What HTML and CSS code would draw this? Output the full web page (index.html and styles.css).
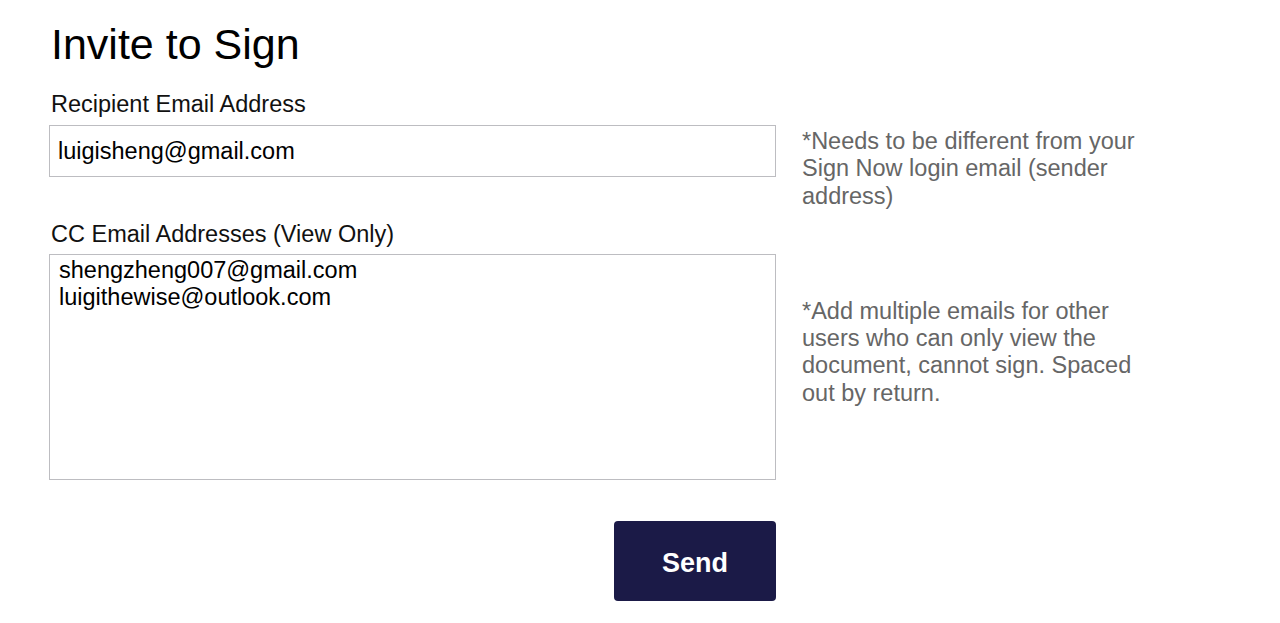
FILE: index.html
```html
<!DOCTYPE html>
<html lang="en">

<head>
	<meta charset="UTF-8">
	<meta name="viewport" content="width=device-width, initial-scale=1.0">
	<title>Invite to Sign</title>
	<link rel="stylesheet" href="styles.css">
</head>

<body>
	<div class="container">
		<h1>Invite to Sign</h1>

		<form id="inviteForm" class="invite-form">
			<label for="recipient" class="label-recipient">Recipient Email Address</label>
			<input type="email" id="recipient" name="recipient" class="field-recipient" value="luigisheng@gmail.com">
			<p class="hint hint-recipient">*Needs to be different from your Sign Now login email (sender address)</p>

			<label for="cc" class="label-cc">CC Email Addresses (View Only)</label>
			<textarea id="cc" name="cc" class="field-cc">shengzheng007@gmail.com
luigithewise@outlook.com</textarea>
			<p class="hint hint-cc">*Add multiple emails for other users who can only view the document, cannot sign. Spaced out by return.</p>

			<button type="button" class="send-btn">Send</button>
		</form>
	</div>
</body>

</html>
```

FILE: styles.css
```css
body {
	font-family: "Liberation Sans", Arial, Helvetica, sans-serif;
	margin: 0;
	padding: 0;
	background-color: #ffffff;
	color: #111;
}

.container {
	padding: 20px 49px;
}

h1 {
	font-size: 43px;
	font-weight: normal;
	color: #000;
	margin: 0 0 21.6px;
	padding-left: 2px;
}

.invite-form {
	display: grid;
	grid-template-columns: 727px 345px;
	column-gap: 26px;
	grid-template-areas:
		"l1 ."
		"f1 h1"
		"l2 h1"
		"f2 h2"
		"btn .";
	font-size: 23.5px;
}

.invite-form label {
	display: block;
	line-height: 27px;
	padding-left: 2px;
}

.label-recipient {
	grid-area: l1;
	margin-bottom: 7px;
}

.label-cc {
	grid-area: l2;
	margin-top: 44px;
	margin-bottom: 6.3px;
}

.field-recipient,
.field-cc {
	box-sizing: border-box;
	width: 100%;
	border: 1px solid #bdbdc1;
	border-radius: 0;
	font-family: inherit;
	font-size: 23.5px;
	color: #000;
	line-height: 27px;
	margin: 0;
	outline: none;
	background: #fff;
}

.field-recipient {
	grid-area: f1;
	height: 52px;
	padding: 2px 8px 0;
}

.field-cc {
	grid-area: f2;
	height: 225.7px;
	padding: 2px 9px;
	resize: none;
	overflow: hidden;
}

.hint {
	margin: 0;
	color: #666;
	line-height: 27.4px;
	align-self: start;
}

.hint-recipient {
	grid-area: h1;
	margin-top: 3.3px;
}

.hint-cc {
	grid-area: h2;
	margin-top: 43.7px;
}

.send-btn {
	grid-area: btn;
	justify-self: end;
	margin-top: 41px;
	width: 162px;
	height: 80px;
	padding-top: 6px;
	background-color: #1b1a47;
	color: white;
	border: none;
	border-radius: 4px;
	font-family: inherit;
	font-size: 27px;
	font-weight: bold;
	cursor: pointer;
}
```
